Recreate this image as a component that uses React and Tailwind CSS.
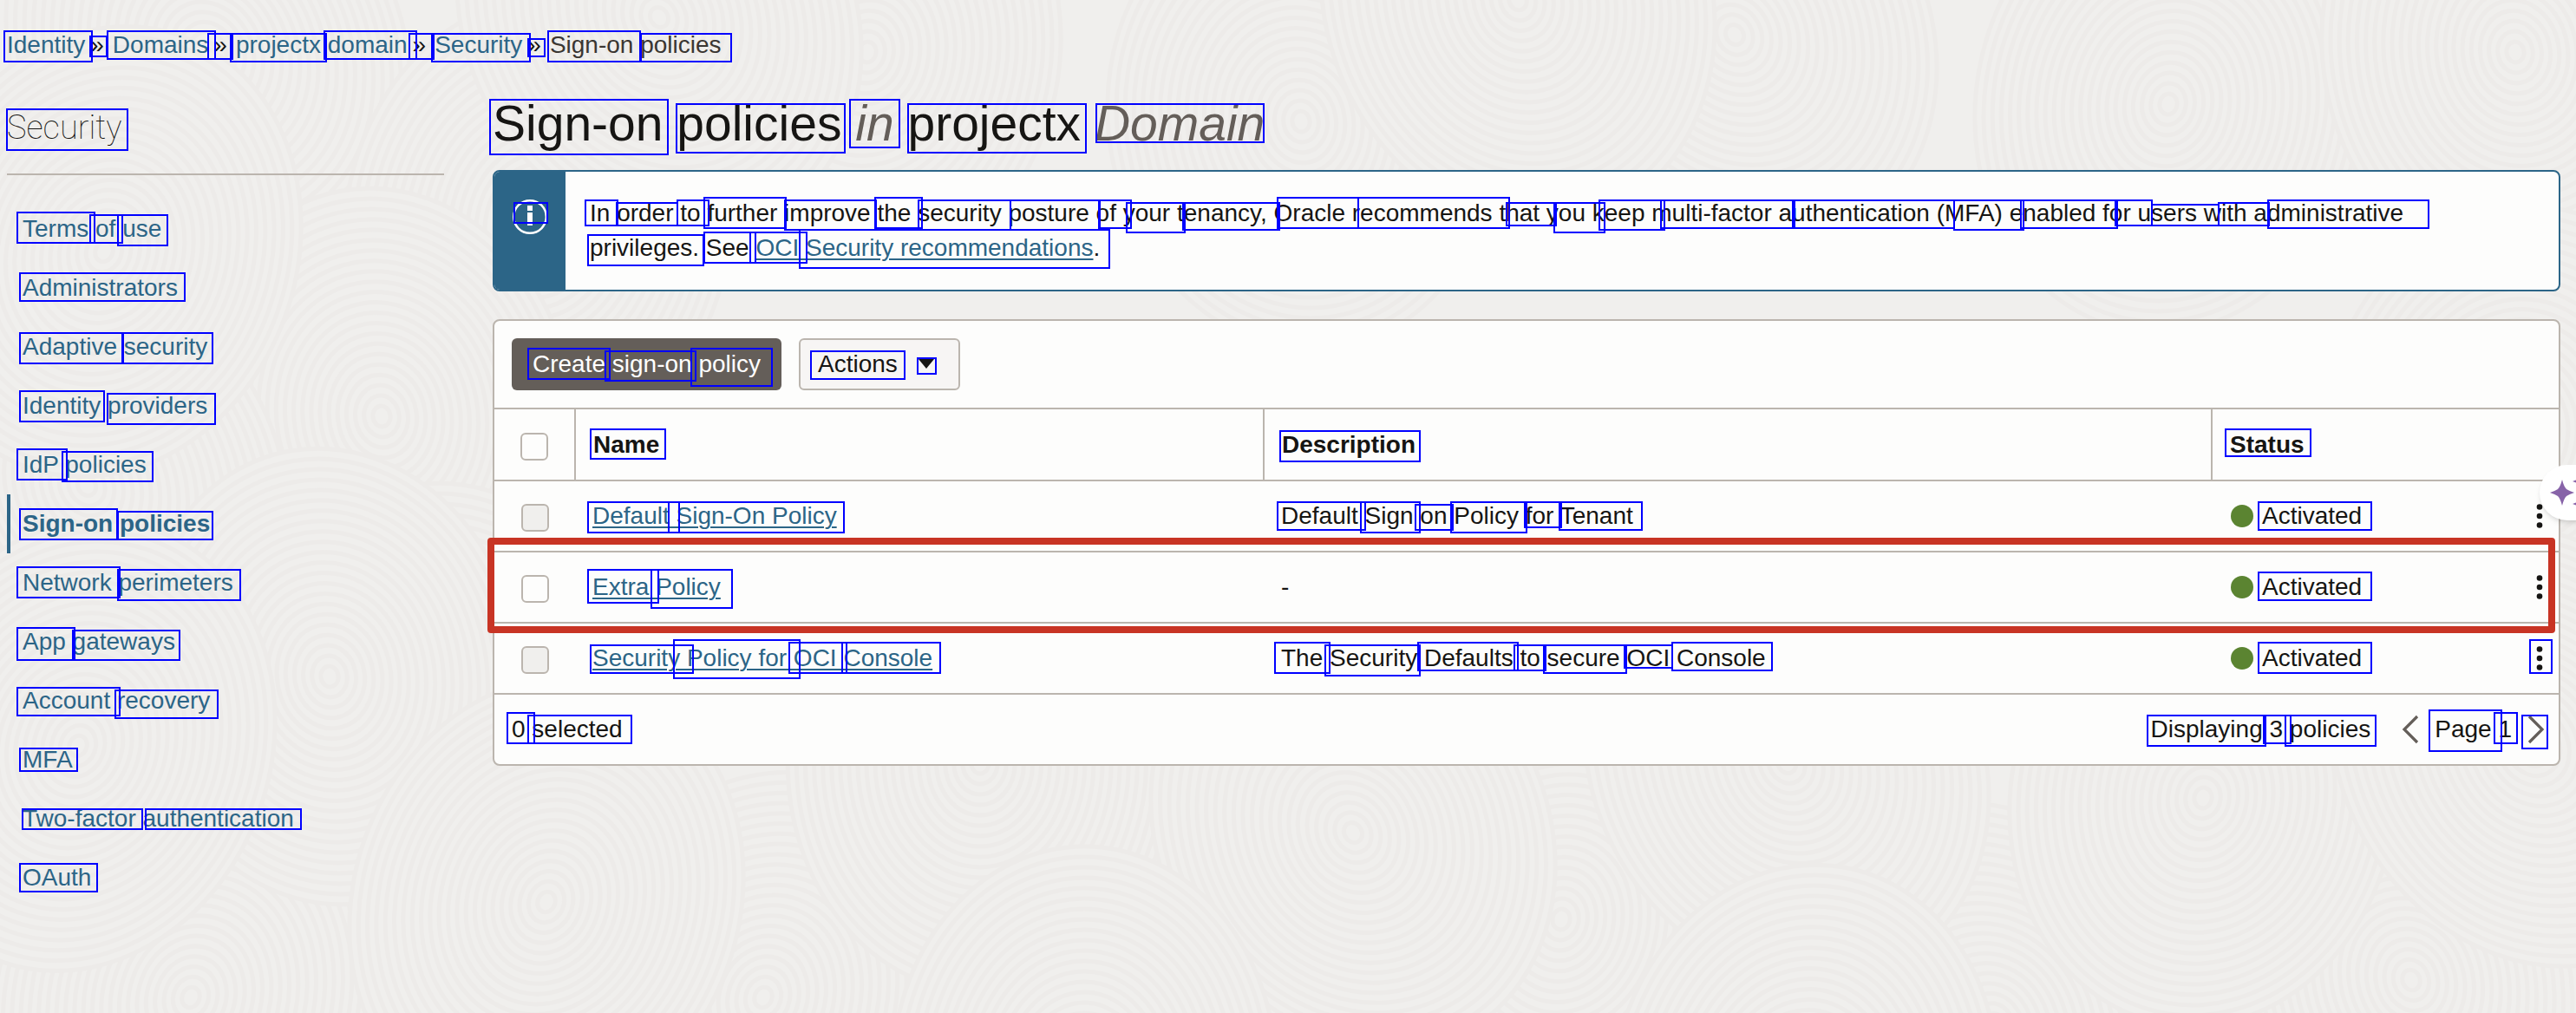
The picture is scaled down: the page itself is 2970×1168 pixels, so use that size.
const navItems = [
    'Terms of use',
    'Administrators',
    'Adaptive security',
    'Identity providers',
    'IdP policies',
    'Sign-on policies',
    'Network perimeters',
    'App gateways',
    'Account recovery',
    'MFA',
    'Two-factor authentication',
    'OAuth',
];

const crumbs = ['Identity', 'Domains', 'projectx domain', 'Security'];

const policies = [
    { name: 'Default Sign-On Policy', description: 'Default Sign on Policy for Tenant', locked: true },
    { name: 'Extra Policy', description: '-', locked: false, highlighted: true },
    { name: 'Security Policy for OCI Console', description: 'The Security Defaults to secure OCI Console', locked: true },
];

// word markers: [left, top, right, bottom]
const markers = [
    [4, 35, 107, 72], [103, 41, 124, 66], [123, 35, 249, 69], [239, 38, 269, 69], [265, 38, 377, 72],
    [373, 35, 481, 69], [471, 38, 501, 69], [497, 38, 612, 72], [608, 44, 629, 66], [631, 35, 739, 72],
    [738, 38, 844, 72], [7, 125, 148, 174],
    [564, 114, 771, 179], [779, 119, 975, 177], [979, 114, 1038, 171], [1046, 119, 1253, 177], [1263, 119, 1458, 165],
    [592, 233, 632, 258], [674, 230, 713, 261], [710, 233, 782, 261], [780, 230, 818, 261], [811, 227, 907, 264],
    [904, 230, 1011, 266], [1008, 227, 1064, 264], [1058, 230, 1166, 266], [1164, 230, 1268, 266], [1267, 230, 1305, 264],
    [1298, 233, 1367, 269], [1363, 233, 1476, 266], [1472, 227, 1567, 264], [1565, 227, 1741, 264], [1736, 233, 1795, 261],
    [1791, 233, 1851, 269], [1843, 230, 1920, 266], [1914, 230, 2070, 264], [2066, 230, 2254, 264], [2252, 230, 2334, 266],
    [2329, 230, 2442, 264], [2438, 230, 2482, 261], [2480, 235, 2559, 261], [2557, 233, 2617, 261], [2614, 230, 2801, 264],
    [677, 270, 812, 307], [811, 267, 872, 304], [864, 267, 931, 304], [921, 264, 1280, 310],
    [608, 401, 704, 438], [697, 404, 803, 440], [796, 401, 891, 446], [934, 404, 1044, 438], [1057, 412, 1080, 432],
    [19, 244, 110, 281], [103, 247, 142, 281], [135, 247, 194, 284], [22, 314, 214, 348], [22, 383, 142, 420],
    [141, 383, 246, 420], [22, 450, 121, 487], [123, 453, 249, 490], [19, 517, 78, 554], [71, 520, 177, 556],
    [22, 586, 136, 623], [135, 589, 246, 623], [19, 653, 139, 690], [135, 656, 278, 693], [19, 723, 87, 762],
    [83, 726, 208, 762], [19, 792, 139, 826], [132, 795, 252, 829], [22, 862, 90, 890], [25, 932, 165, 957],
    [167, 932, 348, 957], [22, 995, 113, 1029],
    [680, 494, 768, 530], [1475, 496, 1638, 533], [2565, 494, 2665, 527],
    [677, 578, 784, 615], [770, 578, 974, 615], [1472, 578, 1575, 612], [1568, 578, 1638, 615], [1631, 581, 1676, 612],
    [1672, 578, 1761, 615], [1757, 578, 1801, 609], [1797, 578, 1894, 612], [2603, 578, 2735, 612],
    [677, 656, 760, 696], [750, 656, 845, 702], [2603, 659, 2735, 693],
    [680, 743, 800, 777], [776, 737, 923, 783], [909, 740, 977, 777], [970, 740, 1085, 777], [1469, 740, 1534, 777],
    [1527, 743, 1638, 780], [1634, 740, 1751, 774], [1745, 743, 1783, 774], [1779, 743, 1876, 777], [1872, 743, 1929, 771],
    [1927, 740, 2044, 774], [2603, 740, 2735, 777], [2916, 737, 2943, 777],
    [584, 821, 617, 858], [608, 824, 729, 858], [2475, 824, 2613, 861], [2609, 824, 2642, 858], [2634, 824, 2740, 861],
    [2800, 818, 2885, 867], [2875, 821, 2903, 858], [2907, 824, 2938, 864],
];

// centres of the background swirls, later ones cover earlier ones
const swirls = [
    [240, 60], [620, 260], [1000, 60], [1500, 140], [2000, 40], [2500, 120], [2900, 60], [440, 480], [100, 560],
    [2900, 500], [520, 820], [880, 1150], [1400, 1180], [1800, 1060], [2300, 1180], [2780, 1130], [2060, 880],
    [120, 290], [220, 1150], [380, 780], [630, 1040], [1130, 880], [1560, 960], [2540, 920], [2920, 860], [90, 860],
    [1250, 1240], [2080, 1260], [760, 20], [1750, 0],
];

const rings = [264, 252, 240, 228, 216, 204, 192, 180, 168, 156, 144, 132, 120, 108, 96, 84, 72, 60, 48, 36, 24, 12];

function Backdrop() {
    return (
        <svg className="absolute inset-0 -z-10 w-full h-full" aria-hidden="true" fill="#f0efed" stroke="#edebe9" strokeWidth="5">
            {swirls.map(([x, y]) => (
                <g key={`${x}-${y}`}>
                    {rings.map((r) => (
                        <ellipse key={r} cx={x} cy={y} rx={r * 0.84} ry={r} transform={`rotate(${((x + y) % 60) - 30} ${x} ${y})`} />
                    ))}
                </g>
            ))}
        </svg>
    );
}

function WordMarkers() {
    return (
        <div className="absolute inset-0 pointer-events-none" aria-hidden="true">
            {markers.map(([left, top, right, bottom], i) => (
                <span
                    key={i}
                    className="absolute border-2 border-[#0000ff]"
                    style={{ left, top, width: right - left, height: bottom - top }}
                />
            ))}
        </div>
    );
}

function Breadcrumb() {
    return (
        <nav aria-label="Breadcrumb" className="flex items-center px-2 pt-8 leading-10">
            {crumbs.map((crumb) => (
                <span key={crumb} className="flex">
                    <a href="#" className="text-[#2c6587]">{crumb}</a>
                    <span className="pl-1.5 pr-2.5">»</span>
                </span>
            ))}
            <span className="text-[#3a3632]">Sign-on policies</span>
        </nav>
    );
}

function Sidebar() {
    return (
        <aside className="w-[504px] shrink-0">
            <h2 className="h-[90px] pt-3 text-[38px] leading-[46px] font-thin font-['Roboto','Liberation_Sans',sans-serif] border-b-2 border-[#bbb5ae]">Security</h2>
            <ul className="pt-7">
                {navItems.map((item) => (
                    <li key={item}>
                        <a
                            href="#"
                            className={
                                item === 'Sign-on policies'
                                    ? 'block h-[68px] leading-[68px] pl-3.5 border-l-4 border-[#2c6587] text-[#2c6587] font-bold'
                                    : 'block h-[68px] leading-[68px] pl-3.5 border-l-4 border-transparent text-[#2c6587]'
                            }
                        >
                            {item}
                        </a>
                    </li>
                ))}
            </ul>
        </aside>
    );
}

function InfoBanner() {
    return (
        <div className="flex border-2 border-[#2c6587] rounded-lg bg-[#fdfdfc] overflow-hidden">
            <div className="w-[82px] shrink-0 bg-[#2c6587] flex justify-center pt-8">
                <svg width="40" height="40" viewBox="0 0 40 40" fill="none" stroke="#fff" aria-hidden="true">
                    <circle cx="20" cy="20" r="18.8" strokeWidth="2.4" />
                    <path d="M20 7v6M20 15v15" strokeWidth="6" />
                </svg>
            </div>
            <p className="py-7 pl-7 pr-[120px] leading-10">
                In order to further improve the security posture of your tenancy, Oracle recommends that you keep multi-factor authentication (MFA) enabled for users with administrative privileges. See{' '}
                <a href="#" className="text-[#2c6587] underline decoration-2 underline-offset-3">OCI Security recommendations</a>.
            </p>
        </div>
    );
}

function Checkbox({ label, disabled }) {
    return (
        <input
            type="checkbox"
            aria-label={label}
            disabled={disabled}
            className="block mx-auto mt-1 appearance-none w-8 h-8 rounded-md border-2 border-[#bbb5ae] disabled:bg-[#f0efed]"
        />
    );
}

function PolicyRow({ policy }) {
    return (
        <tr className="relative h-[82px] border-b-2 border-[#bbb5ae]">
            <td>
                <Checkbox label={`Select ${policy.name}`} disabled={policy.locked} />
                {policy.highlighted && (
                    <span className="absolute -top-4 -bottom-3.5 -left-2 right-1 border-8 border-[#c83424] rounded-sm pointer-events-none" />
                )}
            </td>
            <td className="px-5">
                <a href="#" className="text-[#2c6587] underline decoration-2 underline-offset-3">{policy.name}</a>
            </td>
            <td className="px-5">{policy.description}</td>
            <td className="pl-[22px]">
                <span className="flex items-center gap-2.5">
                    <span className="w-[26px] h-[26px] rounded-full bg-[#5b8431]" />
                    Activated
                </span>
            </td>
            <td className="pr-3">
                <button type="button" aria-label={`Actions for ${policy.name}`} className="block ml-auto">
                    <svg width="20" height="32" viewBox="0 0 20 32" fill="#161513">
                        <circle cx="10" cy="5.5" r="3.3" />
                        <circle cx="10" cy="16" r="3.3" />
                        <circle cx="10" cy="26.5" r="3.3" />
                    </svg>
                </button>
            </td>
        </tr>
    );
}

function PolicyTable() {
    return (
        <section className="mt-8 border-2 border-[#bbb5ae] rounded-lg bg-[#fdfdfc]">
            <div className="flex gap-5 p-5 border-b-2 border-[#bbb5ae]">
                <button type="button" className="h-[60px] px-6 rounded-md bg-[#645e59] text-white">Create sign-on policy</button>
                <button type="button" className="h-[60px] pl-5 pr-7 flex items-center gap-6 rounded-md border-2 border-[#bbb5ae] bg-[#f7f5f4]">
                    Actions
                    <svg width="18" height="12" viewBox="0 0 18 12" fill="#161513" aria-hidden="true">
                        <path d="M0 0h18L9 11z" />
                    </svg>
                </button>
            </div>
            <table className="w-full table-fixed border-collapse text-left">
                <colgroup>
                    <col className="w-[93px]" />
                    <col className="w-[794px]" />
                    <col />
                    <col className="w-[320px]" />
                    <col className="w-20" />
                </colgroup>
                <thead>
                    <tr className="h-[82px] border-b-2 border-[#bbb5ae]">
                        <th className="border-r-2 border-[#bbb5ae]"><Checkbox label="Select all policies" /></th>
                        <th className="px-5 border-r-2 border-[#bbb5ae]">Name</th>
                        <th className="px-5 border-r-2 border-[#bbb5ae]">Description</th>
                        <th className="px-5" colSpan={2}>Status</th>
                    </tr>
                </thead>
                <tbody>
                    {policies.map((policy) => (
                        <PolicyRow key={policy.name} policy={policy} />
                    ))}
                </tbody>
            </table>
            <div className="flex items-center h-20 pl-5 pr-4">
                <span>0 selected</span>
                <span className="ml-auto">Displaying 3 policies</span>
                <div className="flex items-center gap-[18px] ml-9">
                    <button type="button" aria-label="Previous page">
                        <svg width="20" height="36" viewBox="0 0 20 36" fill="none" stroke="#645e59" strokeWidth="3.2">
                            <path d="M18 3L3 18l15 15" />
                        </svg>
                    </button>
                    <span>Page 1</span>
                    <button type="button" aria-label="Next page">
                        <svg width="20" height="36" viewBox="0 0 20 36" fill="none" stroke="#645e59" strokeWidth="3.2">
                            <path d="M2 3l15 15L2 33" />
                        </svg>
                    </button>
                </div>
            </div>
        </section>
    );
}

function AssistantButton() {
    return (
        <button
            type="button"
            aria-label="Open assistant"
            className="absolute top-[536px] -right-[54px] w-24 h-16 rounded-full bg-white shadow-md flex items-center pl-3"
        >
            <svg width="44" height="44" viewBox="0 0 44 44" fill="#8763a8">
                <path d="M14 7Q16 15 19 18Q22 20 28 22Q22 24 19 26Q16 29 14 37Q12 29 9 26Q6 24 0 22Q6 20 9 18Q12 15 14 7Z" />
                <path d="M33 2l2 5 5 2-5 2-2 5-2-5-5-2 5-2z" />
                <path d="M33 28l2 5 5 2-5 2-2 5-2-5-5-2 5-2z" />
            </svg>
        </button>
    );
}

export default function App() {
    return (
        <div className="relative z-0 min-h-screen overflow-hidden bg-[#f0efed] text-[#161513] text-[28px] leading-10 font-['Liberation_Sans',Arial,sans-serif]">
            <Backdrop />
            <Breadcrumb />
            <div className="flex gap-14 pl-2 pr-[18px] pt-10">
                <Sidebar />
                <main className="flex-1 min-w-0">
                    <h1 className="h-[84px] text-[57px] leading-[60px]">
                        Sign-on policies <em className="text-[#645e59]">in</em> projectx <em className="text-[#645e59]">Domain</em>
                    </h1>
                    <InfoBanner />
                    <PolicyTable />
                </main>
            </div>
            <AssistantButton />
            <WordMarkers />
        </div>
    );
}
